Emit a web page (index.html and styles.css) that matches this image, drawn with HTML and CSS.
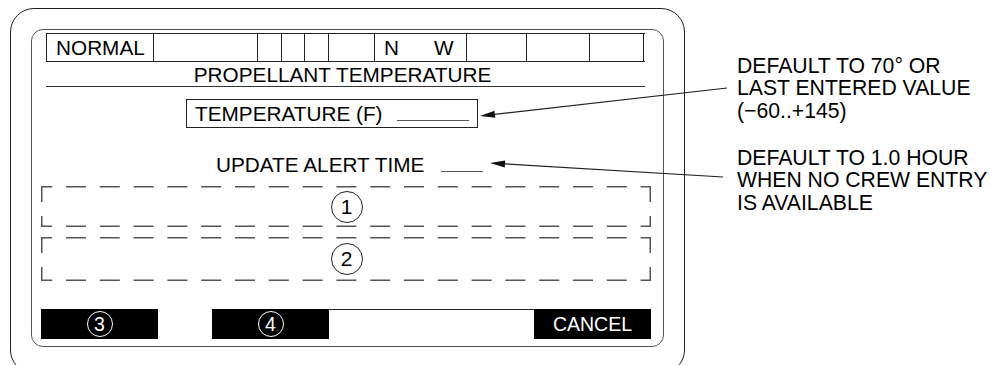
FILE: index.html
```html
<!DOCTYPE html>
<html lang="en">
<head>
    <meta charset="UTF-8">
    <meta name="viewport" content="width=device-width, initial-scale=1.0">
    <title>Propellant Temperature</title>
    <link rel="stylesheet" href="styles.css">
</head>
<body>
    <div class="page">
        <div class="bezel">
            <div class="screen">
                <div class="status">
                    <div class="cell w1">NORMAL</div>
                    <div class="cell w2"></div>
                    <div class="cell w3"></div>
                    <div class="cell w4"></div>
                    <div class="cell w5"></div>
                    <div class="cell w6"></div>
                    <div class="cell w7"><span>N</span><span class="gap-w">W</span></div>
                    <div class="cell w8"></div>
                    <div class="cell w9"></div>
                    <div class="cell w10"></div>
                </div>

                <div class="title">PROPELLANT TEMPERATURE</div>

                <div class="temp-box">TEMPERATURE (F)<span class="blank"></span></div>

                <div class="alert-row">UPDATE ALERT TIME<span class="blank"></span></div>

                <div class="dash-box first">
                    <svg width="610" height="41" viewBox="0 0 610 41">
                        <line class="dash-h" x1="0" y1="0.75" x2="610" y2="0.75"/>
                        <line class="dash-h" x1="0" y1="40.25" x2="610" y2="40.25"/>
                        <line class="dash-v" x1="0.75" y1="0" x2="0.75" y2="41"/>
                        <line class="dash-v" x1="609.25" y1="0" x2="609.25" y2="41"/>
                    </svg>
                    <div class="num">1</div>
                </div>

                <div class="dash-box second">
                    <svg width="610" height="44" viewBox="0 0 610 44">
                        <line class="dash-h" x1="0" y1="0.75" x2="610" y2="0.75"/>
                        <line class="dash-h" x1="0" y1="43.25" x2="610" y2="43.25"/>
                        <line class="dash-v" x1="0.75" y1="0" x2="0.75" y2="44"/>
                        <line class="dash-v" x1="609.25" y1="0" x2="609.25" y2="44"/>
                    </svg>
                    <div class="num">2</div>
                </div>

                <div class="softkeys">
                    <div class="key"><div class="num">3</div></div>
                    <div class="spacer-a"></div>
                    <div class="key"><div class="num">4</div></div>
                    <div class="spacer-b"></div>
                    <div class="key key-label">CANCEL</div>
                </div>
            </div>
        </div>

        <div class="notes">
            <div class="note">DEFAULT TO 70° OR<br>LAST ENTERED VALUE<br>(−60..+145)</div>
            <div class="note">DEFAULT TO 1.0 HOUR<br>WHEN NO CREW ENTRY<br>IS AVAILABLE</div>
        </div>

        <svg class="arrows" width="990" height="365" viewBox="0 0 990 365">
            <line x1="727" y1="88" x2="492" y2="114.6"/>
            <polygon points="480,116 495.3,117.8 494.5,110.8"/>
            <line x1="723" y1="177" x2="502" y2="163.7"/>
            <polygon points="490,163 504.8,167.4 505.2,160.4"/>
        </svg>
    </div>
</body>
</html>
```

FILE: styles.css
```css
body {
    margin: 0;
    font-family: "Liberation Sans", Arial, sans-serif;
    color: #000;
    background-color: #fff;
    overflow: hidden;
}

.page {
    position: relative;
    width: 990px;
    height: 365px;
    display: flex;
    align-items: flex-start;
    padding: 8px 0 0 10px;
    box-sizing: border-box;
}

/* outer housing and inner display */
.bezel {
    flex: none;
    width: 675px;
    height: 366px;
    box-sizing: border-box;
    border: 1.5px solid #222;
    border-radius: 24px;
    padding: 19.5px 0 0 19.5px;
}

.screen {
    width: 633px;
    height: 318px;
    box-sizing: border-box;
    border: 1.5px solid #555;
    border-radius: 12px;
    padding: 3.5px 10.5px 0 9.5px;
    font-size: 20.75px;
}

/* status bar */
.status {
    display: flex;
    height: 29px;
    margin: 0 7px 0 5px;
    border: 1px solid #222;
    border-right: none;
    box-sizing: border-box;
}

.cell {
    flex: none;
    border-right: 1px solid #222;
    line-height: 27px;
    padding-left: 9px;
    box-sizing: border-box;
}

.w1 { width: 107px; }
.w2 { width: 104px; }
.w3 { width: 24px; }
.w4 { width: 23px; }
.w5 { width: 24px; }
.w6 { width: 46px; }
.w7 { width: 92px; }
.w8 { width: 60px; }
.w9 { width: 63px; }
.w10 { width: 54px; }

.gap-w {
    margin-left: 35px;
}

.title {
    margin: 1px 7px 0 5px;
    padding-right: 6px;
    line-height: 23px;
    text-align: center;
    border-bottom: 1px solid #333;
}

/* entry fields */
.blank {
    display: inline-block;
    border-bottom: 1.5px solid #555;
}

.temp-box {
    width: 292px;
    height: 29px;
    margin: 12px 0 0 145px;
    border: 1px solid #222;
    box-sizing: border-box;
    line-height: 27px;
    padding-left: 8px;
}

.temp-box .blank {
    width: 72px;
    margin-left: 14px;
}

.alert-row {
    margin: 25px 0 0 175px;
    line-height: 24px;
}

.alert-row .blank {
    width: 42px;
    margin-left: 17px;
}

/* dashed areas */
.dash-box {
    position: relative;
    height: 41px;
    margin-top: 9px;
    display: flex;
    align-items: center;
    justify-content: center;
}

.dash-box.second {
    height: 44px;
    margin-top: 10px;
}

.dash-box svg {
    position: absolute;
    top: 0;
    left: 0;
}

.dash-h,
.dash-v {
    stroke: #555;
    stroke-width: 1.5;
}

.dash-h {
    stroke-dasharray: 20 13.8;
    stroke-dashoffset: 8.8;
}

.dash-v {
    stroke-dasharray: 16 14;
}

.num {
    width: 32px;
    height: 32px;
    border: 1.2px solid #222;
    border-radius: 50%;
    box-sizing: border-box;
    display: flex;
    align-items: center;
    justify-content: center;
    font-size: 21px;
}

/* soft keys */
.softkeys {
    display: flex;
    height: 30px;
    margin-top: 28px;
}

.key {
    width: 117px;
    background-color: #000;
    color: #fff;
    display: flex;
    align-items: center;
    justify-content: center;
}

.key .num {
    width: 26px;
    height: 26px;
    border: 1.3px solid #fff;
    font-size: 19.5px;
}

.key-label {
    font-size: 19.5px;
}

.spacer-a {
    width: 54px;
}

.spacer-b {
    width: 205px;
    border-top: 1px solid #222;
    box-sizing: border-box;
}

/* annotations */
.notes {
    margin: 46.5px 0 0 52px;
    font-size: 21.2px;
    line-height: 22.5px;
    white-space: nowrap;
}

.note + .note {
    margin-top: 24.5px;
}

.arrows {
    position: absolute;
    top: 0;
    left: 0;
    pointer-events: none;
}

.arrows line {
    stroke: #222;
    stroke-width: 1.2;
}

.arrows polygon {
    fill: #111;
}
```
